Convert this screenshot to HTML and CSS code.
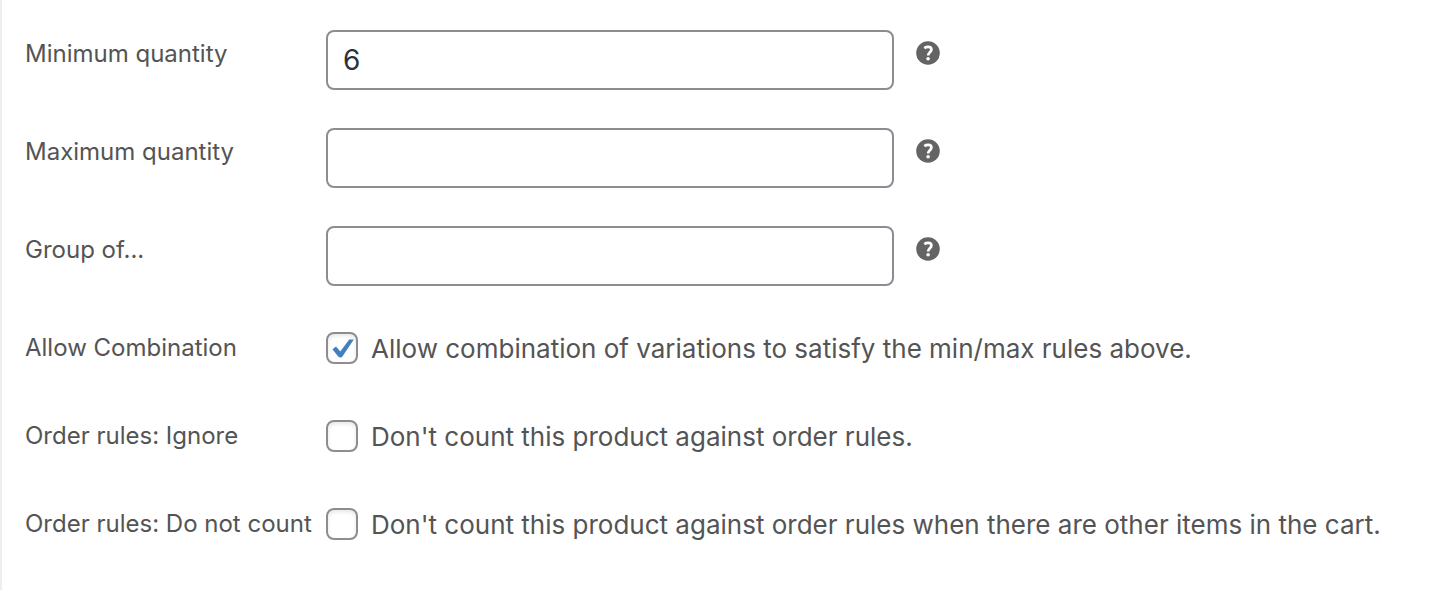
FILE: index.html
```html
<!DOCTYPE html>
<html lang="en">
<head>
<meta charset="utf-8">
<title>Quantity rules</title>
<link rel="stylesheet" href="styles.css">
</head>
<body>
<svg class="sprite" aria-hidden="true">
  <symbol id="help" viewBox="0 0 24 24">
    <circle cx="12" cy="12" r="11.8" fill="#646464"/>
    <path d="M8.3 7.1C9.6 6.2 10.9 5.9 12.2 5.9C14.2 5.9 15.4 6.9 15.4 8.5C15.4 11.3 12.1 11.2 12.1 14.6" fill="none" stroke="#fff" stroke-width="2.7"/>
    <circle cx="12.1" cy="17.8" r="1.8" fill="#fff"/>
  </symbol>
</svg>
<form class="panel">
  <div class="row row-text">
    <label class="name" for="min">Minimum quantity</label>
    <input class="field" id="min" type="text" value="6">
    <button class="help" type="button" aria-label="Help"><svg><use href="#help"/></svg></button>
  </div>
  <div class="row row-text">
    <label class="name" for="max">Maximum quantity</label>
    <input class="field" id="max" type="text">
    <button class="help" type="button" aria-label="Help"><svg><use href="#help"/></svg></button>
  </div>
  <div class="row row-text">
    <label class="name" for="group">Group of...</label>
    <input class="field" id="group" type="text">
    <button class="help" type="button" aria-label="Help"><svg><use href="#help"/></svg></button>
  </div>
  <div class="row row-check">
    <label class="name" for="combo">Allow Combination</label>
    <span class="box">
      <input class="check" id="combo" type="checkbox" checked>
      <svg class="tick" viewBox="0 0 32 32" aria-hidden="true"><path d="M6.4 17.2L10 14.6L14.3 19.6L23.2 7.4H27.8L16.6 24.2Q14.6 26.6 12.2 24.4Z" fill="#3f80c0"/></svg>
    </span>
    <label class="desc" for="combo">Allow combination of variations to satisfy the min/max rules above.</label>
  </div>
  <div class="row row-check">
    <label class="name" for="ignore">Order rules: Ignore</label>
    <span class="box"><input class="check" id="ignore" type="checkbox"></span>
    <label class="desc" for="ignore">Don't count this product against order rules.</label>
  </div>
  <div class="row row-check">
    <label class="name" for="nocount">Order rules: Do not count</label>
    <span class="box"><input class="check" id="nocount" type="checkbox"></span>
    <label class="desc" for="nocount">Don't count this product against order rules when there are other items in the cart.</label>
  </div>
</form>
</body>
</html>
```
FILE: styles.css
```css
* { box-sizing: border-box; }
body {
  margin: 0;
  background: #fff;
  color: #545454;
  font-family: Inter, "Liberation Sans", sans-serif;
}
.sprite { display: none; }
.panel {
  min-height: 100vh;
  padding: 30px 23px;
  border-left: 2px solid #eee;
}
.row {
  display: grid;
  align-items: start;
}
.row-text {
  grid-template-columns: 301px 41% 46px;
  margin-bottom: 38px;
}
.row-check {
  grid-template-columns: 301px 32px minmax(0, 1fr);
  margin-bottom: 46px;
  padding-top: 8px;
}
.row-check:last-child { margin-bottom: 0; }
.name {
  font-size: 24px;
  line-height: 32px;
  white-space: nowrap;
}
.row-text .name { padding-top: 8px; }
.field {
  width: 100%;
  height: 60px;
  padding: 0 15px;
  border: 2px solid #8c8c92;
  border-radius: 8px;
  background: #fff;
  color: #2c3338;
  font: 28px Inter, "Liberation Sans", sans-serif;
}
.help {
  width: 24px;
  height: 24px;
  margin: 11px 0 0 22px;
  padding: 0;
  border: 0;
  background: none;
}
.help svg { display: block; width: 24px; height: 24px; }
.box {
  position: relative;
  display: block;
  height: 32px;
}
.check {
  appearance: none;
  display: block;
  width: 32px;
  height: 32px;
  margin: 0;
  border: 2px solid #8c8c92;
  border-radius: 8px;
  background: #fff;
  box-shadow: inset 0 2px 4px rgba(0, 0, 0, 0.1);
}
.tick {
  position: absolute;
  inset: 0;
  visibility: hidden;
  pointer-events: none;
}
.check:checked + .tick { visibility: visible; }
.desc {
  padding-left: 13px;
  font-size: 26px;
  line-height: 34px;
  white-space: nowrap;
}
```
